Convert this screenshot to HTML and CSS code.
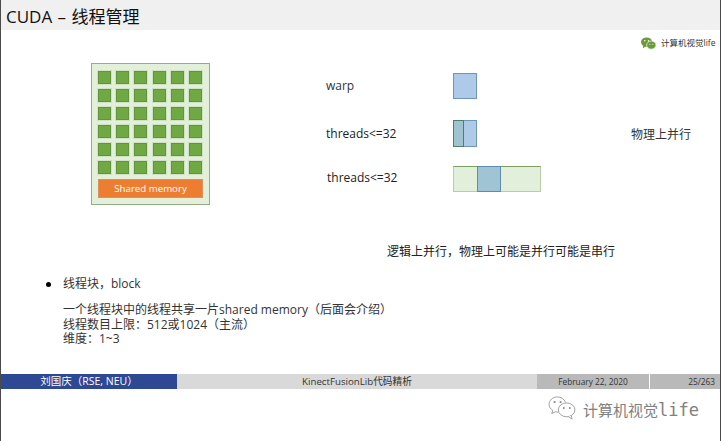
FILE: index.html
```html
<!DOCTYPE html>
<html lang="zh">
<head>
<meta charset="utf-8">
<title>CUDA – 线程管理</title>
<link rel="stylesheet" href="styles.css">
</head>
<body>
<div class="slide">
  <header class="title-bar">CUDA – 线程管理</header>
  <main class="canvas">
    <div class="brand">
      <svg class="brand-icon" viewBox="0 0 16 13" aria-hidden="true">
        <ellipse cx="6" cy="5" rx="6" ry="5" fill="#6a9a3c"/>
        <path d="M2.5 8.5 L2 11.5 L5.5 9.5Z" fill="#6a9a3c"/>
        <ellipse cx="11" cy="8.2" rx="5" ry="4.3" fill="#6a9a3c" stroke="#fff" stroke-width=".7"/>
        <circle cx="4" cy="3.6" r=".8" fill="#fff"/>
        <circle cx="8" cy="3.6" r=".8" fill="#fff"/>
        <circle cx="9.4" cy="7.3" r=".6" fill="#fff"/>
        <circle cx="12.6" cy="7.3" r=".6" fill="#fff"/>
      </svg>
      <span>计算机视觉life</span>
    </div>

    <div class="block-panel">
      <div class="thread-grid">
        <i></i><i></i><i></i><i></i><i></i><i></i>
        <i></i><i></i><i></i><i></i><i></i><i></i>
        <i></i><i></i><i></i><i></i><i></i><i></i>
        <i></i><i></i><i></i><i></i><i></i><i></i>
        <i></i><i></i><i></i><i></i><i></i><i></i>
        <i></i><i></i><i></i><i></i><i></i><i></i>
      </div>
      <div class="shared">Shared memory</div>
    </div>

    <span class="label label-warp">warp</span>
    <span class="label label-t1">threads&lt;=32</span>
    <span class="label label-t2">threads&lt;=32</span>

    <div class="warp warp-one"></div>
    <div class="warp warp-two"><div class="overlap"></div></div>
    <div class="wide"><div class="wide-mid"></div></div>

    <span class="label note-phys">物理上并行</span>
    <span class="label note-logic">逻辑上并行，物理上可能是并行可能是串行</span>

    <div class="notes">
      <div class="bullet-row"><span class="dot"></span><span>线程块，block</span></div>
      <p class="detail">一个线程块中的线程共享一片shared memory（后面会介绍）<br>线程数目上限：512或1024（主流）<br>维度：1~3</p>
    </div>
  </main>
  <footer class="footer">
    <div class="f-author">刘国庆（RSE, NEU）</div>
    <div class="f-title">KinectFusionLib代码精析</div>
    <div class="f-date">February 22, 2020</div>
    <div class="f-page">25/263</div>
  </footer>
  <div class="watermark">
    <svg class="wm-icon" viewBox="0 0 30 26" aria-hidden="true">
      <path d="M19 7 C17 3 14 1 10 1 C5 1 1 4.500 1 9 C1 12 2.500 14 5 15.500 L4 19 L8 17 C9 17.300 10 17.500 11 17.500" fill="none" stroke="#9a9a9a" stroke-width="1"/>
      <ellipse cx="20" cy="15" rx="9" ry="7.500" fill="none" stroke="#9a9a9a" stroke-width="1"/>
      <path d="M25 21 L26 25 L22 22.500" fill="#fff" stroke="#9a9a9a" stroke-width="1"/>
      <circle cx="7" cy="6.500" r="1.200" fill="#888"/>
      <circle cx="13.500" cy="6.500" r="1.200" fill="#888"/>
      <circle cx="17" cy="13" r="1" fill="#888"/>
      <circle cx="23.500" cy="13" r="1" fill="#888"/>
    </svg>
    <span>计算机视觉<span class="wm-latin">life</span></span>
  </div>
</div>
</body>
</html>
```
FILE: styles.css
```css
* { box-sizing: border-box; }
html, body { margin: 0; padding: 0; background: #fff; }
body { width: 722px; height: 441px; overflow: hidden; }

.slide {
  position: relative;
  width: 721px;
  height: 441px;
  border-left: 1px solid #4a4a4a;
  border-right: 1px solid #4a4a4a;
  font-family: "Open Sans", "Noto Sans CJK SC", sans-serif;
  color: #333;
  background: #fff;
}

.title-bar {
  height: 30px;
  padding: 5px 0 0 5px;
  background: #f0f0f0;
  color: #111;
  font-size: 17px;
  line-height: 24px;
  word-spacing: 1px;
}

.canvas { position: relative; height: 344px; }

.brand {
  position: absolute;
  left: 640px;
  top: 6px;
  display: flex;
  align-items: center;
  gap: 5px;
  font-size: 8.500px;
  line-height: 14px;
  color: #333;
}
.brand-icon { width: 15px; height: 13px; }

.block-panel {
  position: absolute;
  left: 90px;
  top: 33px;
  width: 119px;
  height: 142px;
  padding: 7px 6px 0;
  background: #e2efda;
  border: 1px solid #94ad82;
}
.thread-grid {
  display: grid;
  grid-template-columns: repeat(6, 13px);
  grid-auto-rows: 13px;
  column-gap: 5.200px;
  row-gap: 5px;
}
.thread-grid i {
  display: block;
  background: #70a844;
  border: 1px solid #62953c;
  box-shadow: 0 0 0 1px #d0e2c4;
}
.shared {
  margin-top: 5px;
  height: 19px;
  width: 105px;
  background: #ed7d31;
  border: 1px solid #d9925c;
  color: #fff;
  font-size: 9.700px;
  line-height: 17px;
  text-align: center;
}

.label { position: absolute; font-size: 12px; line-height: 16px; white-space: nowrap; color: #333; }
.label-warp { left: 325px; top: 48px; }
.label-t1 { left: 325px; top: 96px; color: #222; }
.label-t2 { left: 326px; top: 140px; color: #222; }
.note-phys { left: 630px; top: 97px; }
.note-logic { left: 386px; top: 214px; color: #222; }

.warp {
  position: absolute;
  left: 452px;
  width: 24px;
  background: #adcbe9;
  border: 1px solid #6f95b8;
}
.warp-one { top: 43px; height: 26px; }
.warp-two { top: 90px; height: 27px; }
.overlap {
  position: absolute;
  left: -1px;
  top: -1px;
  width: 11px;
  height: 27px;
  background: #9fc4d0;
  border: 1px solid #4f7f6c;
}
.wide {
  position: absolute;
  left: 452px;
  top: 136px;
  width: 88px;
  height: 26px;
  background: #e2efda;
  border: 1px solid #b7cfa6;
  border-top-color: #7ba05e;
}
.wide-mid {
  position: absolute;
  left: 23px;
  top: -1px;
  width: 24px;
  height: 26px;
  background: #9fc4d6;
  border: 1px solid #5f8cae;
}

.notes { position: absolute; left: 45px; top: 246px; font-size: 12px; line-height: 14px; color: #333; }
.bullet-row { display: flex; align-items: center; gap: 12px; line-height: 16px; }
.dot { width: 5px; height: 5px; border-radius: 50%; background: #000; }
.detail { margin: 11px 0 0 17px; line-height: 14.500px; white-space: nowrap; }

.footer {
  display: flex;
  height: 15px;
  font-size: 8.300px;
  line-height: 15px;
  text-align: center;
  color: #333;
}
.f-author { width: 176px; flex: none; background: #2e4893; color: #fff; font-size: 10.500px; }
.f-title { width: 360px; flex: none; background: #d9d9d9; font-size: 9.700px; }
.f-date { width: 112px; flex: none; background: #b9b9b9; }
.f-page { width: 70px; flex: none; margin-left: 1px; background: #b9b9b9; text-align: right; padding-right: 5px; font-size: 8.300px; }

.watermark {
  position: absolute;
  left: 547px;
  top: 398px;
  display: flex;
  align-items: center;
  gap: 7px;
  font-size: 15px;
  line-height: 24px;
  color: #808080;
  font-family: "Noto Sans CJK SC", "Open Sans", sans-serif;
}
.wm-latin { font-family: "DejaVu Sans Mono", monospace; font-size: 17px; }
.wm-icon { width: 28px; height: 24px; margin-top: -5px; }
```
